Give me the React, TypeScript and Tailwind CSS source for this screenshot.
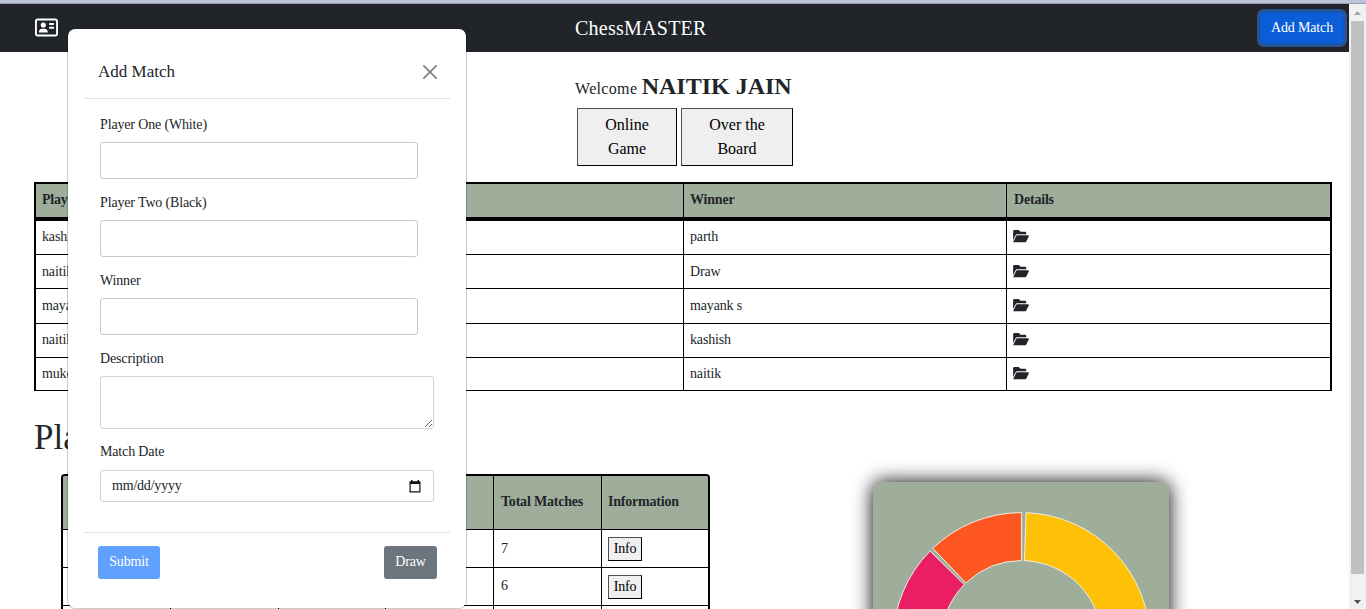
import type { ReactNode } from "react";
import { FaRegAddressCard } from "react-icons/fa6";

const matches = [
  { one: "kashish", two: "parth", winner: "parth", row: "h-[34px]", text: "pt-[5px]", icon: "pt-2" },
  { one: "naitik", two: "kashish", winner: "Draw", row: "h-[34px]", text: "pt-[6px]", icon: "pt-[9px]" },
  { one: "mayank s", two: "naitik", winner: "mayank s", row: "h-[35px]", text: "pt-[6px]", icon: "pt-[9px]" },
  { one: "naitik", two: "kashish", winner: "kashish", row: "h-[34px]", text: "pt-[5px]", icon: "pt-2" },
  { one: "mukesh", two: "naitik", winner: "naitik", row: "h-[33px]", text: "pt-[5px]", icon: "pt-2" },
];

const players = [
  { rank: 1, name: "naitik", wins: 4, draws: 1, total: 7, pad: "pt-2" },
  { rank: 2, name: "kashish", wins: 3, draws: 1, total: 6, pad: "pt-[7px]" },
];

const CX = 148.6;
const CY = 159;
const OUTER = 128.4;
const INNER = 80.4;

function arc(from: number, to: number) {
  const pt = (r: number, deg: number) => {
    const a = (deg * Math.PI) / 180;
    return `${CX + r * Math.sin(a)} ${CY - r * Math.cos(a)}`;
  };
  const large = to - from > 180 ? 1 : 0;
  return `M${pt(OUTER, from)} A${OUTER} ${OUTER} 0 ${large} 1 ${pt(OUTER, to)} L${pt(INNER, to)} A${INNER} ${INNER} 0 ${large} 0 ${pt(INNER, from)} Z`;
}

function FolderOpenIcon() {
  return (
    <svg viewBox="0 0 576 512" className="h-[14px] w-4" fill="currentColor">
      <path d="M147.8 192H480V144C480 117.5 458.5 96 432 96h-160l-64-64h-160C21.49 32 0 53.49 0 80v328.4l90.54-181.1C101.4 205.6 123.4 192 147.8 192zM543.1 224H147.8C135.7 224 124.6 230.8 119.2 241.7L0 480h447.1c12.12 0 23.2-6.852 28.62-17.69l96-192C583.2 249 567.7 224 543.1 224z" />
    </svg>
  );
}

function Navbar() {
  return (
    <nav className="flex h-12 shrink-0 items-center bg-[#212529] pl-[35px] pr-[5px] text-white">
      <FaRegAddressCard className="mb-[2px] h-[21px] w-[23px]" />
      <div className="ml-[517px] text-[20px] leading-[24px] tracking-[0.25px]">ChessMASTER</div>
      <button className="ml-auto h-8 w-[84px] rounded-[4px] border border-[#0a58ca] bg-[#0b5ed7] text-[14px] leading-5 tracking-[-0.15px] ring-3 ring-[#3184fd80]">
        Add Match
      </button>
    </nav>
  );
}

function ModeButton({ children, className }: { children: ReactNode; className: string }) {
  return (
    <button
      className={`h-[58px] border border-t-[#505050] border-r-black border-b-black border-l-[#505050] bg-[#efefef] text-[16px] leading-6 text-black ${className}`}
    >
      {children}
    </button>
  );
}

function MatchTable() {
  return (
    <div className="mt-4 ml-[34px] w-[1298px] border-x-2 border-t-2 border-black text-[14px] tracking-[-0.15px]">
      <div className="flex h-[37px] border-b-4 border-black bg-[#9fae9b] font-bold tracking-[-0.2px]">
        <div className="w-[324px] border-r border-black pt-[5px] pl-[6px] leading-[21px]">Player One</div>
        <div className="w-[324px] border-r border-black pt-[5px] pl-[6px] leading-[21px]">Player Two</div>
        <div className="w-[323px] border-r border-black pt-[5px] pl-[6px] leading-[21px]">Winner</div>
        <div className="pt-[5px] pl-[7px] leading-[21px]">Details</div>
      </div>
      {matches.map((m, i) => (
        <div key={i} className={`flex border-b border-black ${m.row}`}>
          <div className={`w-[324px] border-r border-black pl-[6px] leading-[21px] ${m.text}`}>{m.one}</div>
          <div className={`w-[324px] border-r border-black pl-[6px] leading-[21px] ${m.text}`}>{m.two}</div>
          <div className={`w-[323px] border-r border-black pl-[6px] leading-[21px] ${m.text}`}>{m.winner}</div>
          <div className={`pl-[6px] ${m.icon}`}>
            <FolderOpenIcon />
          </div>
        </div>
      ))}
    </div>
  );
}

function PlayerTable() {
  const cell = "w-[108px] border-r border-black pl-[7px] leading-[21px]";
  const narrow = "w-[107px] border-r border-black pl-[7px] leading-[21px]";
  return (
    <div className="w-[649px] shrink-0 overflow-hidden rounded-t-[4px] border-x-2 border-t-2 border-black text-[14px] tracking-[-0.15px]">
      <div className="flex h-[54px] border-b border-black bg-[#9fae9b] font-bold tracking-[-0.2px]">
        <div className={`${cell} pt-[15px]`}>Rank</div>
        <div className={`${cell} pt-[15px]`}>Player</div>
        <div className={`${narrow} pt-[15px]`}>Wins</div>
        <div className={`${cell} pt-[15px]`}>Draws</div>
        <div className={`${cell} pt-[15px]`}>Total Matches</div>
        <div className="pt-[15px] pl-[6px] leading-[21px]">Information</div>
      </div>
      {players.map((p) => (
        <div key={p.rank} className="flex h-[38px] border-b border-black">
          <div className={`${cell} ${p.pad}`}>{p.rank}</div>
          <div className={`${cell} ${p.pad}`}>{p.name}</div>
          <div className={`${narrow} ${p.pad}`}>{p.wins}</div>
          <div className={`${cell} ${p.pad}`}>{p.draws}</div>
          <div className={`${cell} ${p.pad}`}>{p.total}</div>
          <div className="pt-[7px] pl-[6px]">
            <button className="block h-6 w-[34px] border border-t-[#505050] border-r-black border-b-black border-l-[#505050] bg-[#efefef] pb-px text-[14px] leading-[21px] text-black">
              Info
            </button>
          </div>
        </div>
      ))}
      <div className="flex h-[38px]">
        <div className={cell} />
        <div className={cell} />
        <div className={narrow} />
        <div className={cell} />
        <div className={cell} />
      </div>
    </div>
  );
}

function DonutCard() {
  return (
    <div className="mt-2 ml-[163px] h-[318px] w-[296px] shrink-0 rounded-[9px] bg-[#9fae9b] shadow-[0_0_20px_#000]">
      <svg width="296" height="318" stroke="#f1efe6" strokeWidth="1">
        <path d={arc(2, 178)} fill="#ffc107" />
        <path d={arc(180, 223.8)} fill="#4caf50" />
        <path d={arc(225.8, 314.5)} fill="#e91e63" />
        <path d={arc(316.2, 360)} fill="#ff5722" />
      </svg>
    </div>
  );
}

function TextField({ label }: { label: string }) {
  return (
    <label className="flex h-[78px] flex-col">
      <span className="h-[27px] leading-5">{label}</span>
      <input className="h-[37px] w-[318px] rounded-[3px] border border-[#c7c8ca] px-3 outline-none" />
    </label>
  );
}

function AddMatchModal() {
  return (
    <section className="absolute top-[28px] left-[67px] z-10 flex h-[581px] w-[400px] flex-col rounded-[8px] border border-black/20 bg-white bg-clip-padding px-4 text-[14px] tracking-[-0.15px]">
      <header className="flex h-[70px] shrink-0 items-center justify-between border-b border-[#dee2e6] pt-[17px] pr-[13px] pl-[14px]">
        <h5 className="text-[17px] leading-6 tracking-normal">Add Match</h5>
        <svg width="14" height="14" viewBox="0 0 14 14" fill="none" stroke="#808080" strokeWidth="1.7" strokeLinecap="round">
          <path d="M0.9 0.9 13.1 13.1M13.1 0.9 0.9 13.1" />
        </svg>
      </header>
      <div className="flex h-[433px] shrink-0 flex-col pt-4 pl-4">
        <TextField label="Player One (White)" />
        <TextField label="Player Two (Black)" />
        <TextField label="Winner" />
        <label className="flex h-[93px] shrink-0 flex-col">
          <span className="h-[27px] shrink-0 leading-5">Description</span>
          <textarea className="h-[53px] w-[334px] rounded-[3px] border border-[#ced4da] outline-none" />
        </label>
        <div className="h-7 shrink-0 leading-5">Match Date</div>
        <div className="flex h-8 w-[334px] shrink-0 items-center justify-between rounded-[3px] border border-[#ced4da] pr-[12px] pl-[11px]">
          <span className="leading-5 tracking-[-0.2px]">mm/dd/yyyy</span>
          <svg width="12" height="13" viewBox="0 0 12 13" fill="#111">
            <path d="M2 0h1.5v1.2h5V0H10v1.2h1.5V12.5H.5V1.2H2zM1.7 4v7.3h8.6V4z" fillRule="evenodd" />
          </svg>
        </div>
      </div>
      <footer className="flex shrink-0 justify-between border-t border-[#dee2e6] pt-[13px] pr-[13px] pl-[14px] text-white">
        <button className="h-[33px] w-[62px] rounded-[3px] bg-[#60a1ff] pb-[2px] leading-5">Submit</button>
        <button className="h-[33px] w-[53px] rounded-[3px] bg-[#6c757d] pb-[2px] leading-5">Draw</button>
      </footer>
    </section>
  );
}

function Scrollbar() {
  return (
    <div className="flex w-[17px] shrink-0 flex-col items-center bg-[#f1f1f1] pr-px">
      <div className="flex h-[17px] w-full shrink-0 items-center justify-center">
        <svg width="7" height="4" fill="#a3a3a3"><path d="M0 4 3.5 0 7 4z" /></svg>
      </div>
      <div className="h-[553px] w-[13px] shrink-0 bg-[#c1c1c1]" />
      <div className="mt-auto flex h-[14px] w-full items-center justify-center">
        <svg width="7" height="4" fill="#505050"><path d="M0 0h7L3.5 4z" /></svg>
      </div>
    </div>
  );
}

export default function App() {
  return (
    <div className="relative flex h-[609px] w-[1366px] flex-col overflow-hidden bg-white font-['Liberation_Serif',serif] text-[#212529]">
      <div className="h-1 shrink-0 border-b border-[#9da3b4] bg-[#bcc4d8]" />
      <div className="flex min-h-0 flex-1">
        <main className="flex w-[1349px] shrink-0 flex-col overflow-hidden">
          <Navbar />
          <div className="mt-[18px] ml-[575px] flex h-[38px] shrink-0 items-baseline whitespace-pre">
            <span className="text-[16px] tracking-[0.33px]">Welcome </span>
            <b className="text-[24px] leading-8">NAITIK JAIN</b>
          </div>
          <div className="ml-[577px] flex gap-1">
            <ModeButton className="w-[100px]">Online<br />Game</ModeButton>
            <ModeButton className="w-28">Over the<br />Board</ModeButton>
          </div>
          <MatchTable />
          <h2 className="mt-[26px] ml-[34px] h-[57px] shrink-0 text-[35px] leading-[42px]">Players</h2>
          <div className="flex min-h-0 flex-1 items-start pl-[61px]">
            <PlayerTable />
            <DonutCard />
          </div>
        </main>
        <Scrollbar />
      </div>
      <AddMatchModal />
    </div>
  );
}
